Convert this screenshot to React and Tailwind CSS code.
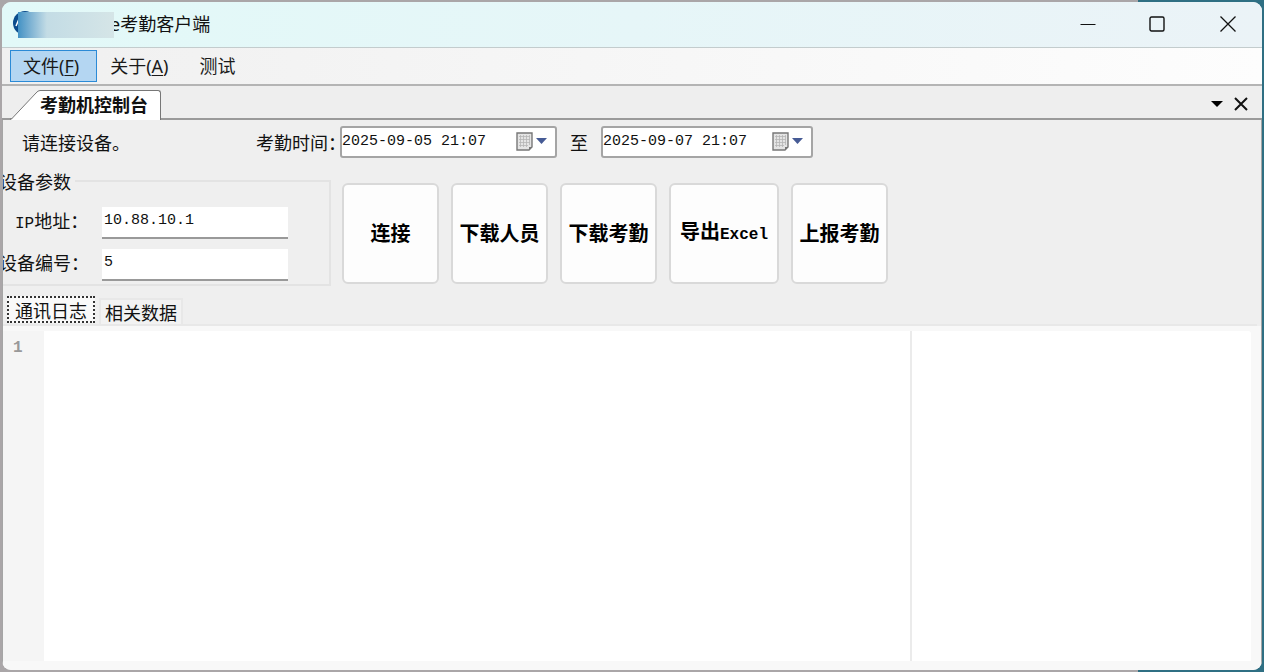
import { useState } from "react";

const menus = [
  { name: "文件", hotkey: "F", active: true },
  { name: "关于", hotkey: "A" },
  { name: "测试" },
];

const actions = [
  { name: "连接", width: "w-[97px]" },
  { name: "下载人员", width: "w-[97px]" },
  { name: "下载考勤", width: "w-[97px]" },
  { name: "导出", latin: "Excel", width: "w-[110px]" },
  { name: "上报考勤", width: "w-[97px]" },
];

function TitleBar() {
  return (
    <header className="flex h-[46px] shrink-0 items-center justify-between border-b border-[#c3cccd] bg-gradient-to-r from-[#e2f9f8] via-[#e6f6f8] to-[#ebf3f7] pb-[2px]">
      <div className="relative flex h-full items-center pl-[108px]">
        <svg className="absolute left-[11px] top-[9px]" width="24" height="24" viewBox="0 0 24 24">
          <circle cx="12" cy="12" r="12" fill="#0b4c8c" />
          <path d="M3 15l3-7 2 7" stroke="#fff" strokeWidth="1.5" fill="none" />
        </svg>
        <h1 className="text-[18px] leading-6 text-[#111]">e考勤客户端</h1>
        <div className="absolute left-4 top-[10px] h-[26px] w-[96px] bg-gradient-to-r from-[#4292c4] via-[#c3dce5] via-30% to-[#d5e5e7]" />
      </div>

      <div className="flex pr-[26px]">
        <button aria-label="最小化" className="flex w-[70px] justify-end">
          <svg width="16" height="16" viewBox="0 0 16 16" stroke="#111" fill="none">
            <path d="M0.5 8.5h15" />
          </svg>
        </button>
        <button aria-label="最大化" className="flex w-[69px] justify-end">
          <svg width="16" height="16" viewBox="0 0 16 16" stroke="#111" strokeWidth="1.4" fill="none">
            <rect x="1" y="1" width="14" height="14" rx="1.5" />
          </svg>
        </button>
        <button aria-label="关闭" className="flex w-[71px] justify-end">
          <svg width="16" height="16" viewBox="0 0 16 16" stroke="#111" strokeWidth="1.3" fill="none">
            <path d="M0.5 0.5l15 15M15.5 0.5l-15 15" />
          </svg>
        </button>
      </div>
    </header>
  );
}

function MenuBar() {
  return (
    <nav className="flex h-[38px] shrink-0 items-center border-b-2 border-[#b4b4b4] bg-gradient-to-r from-[#f0f0f0] to-[#fdfdfd] pl-2">
      {menus.map((menu) => (
        <button
          key={menu.name}
          className={`h-8 border pl-3 pr-[17px] text-[18px] leading-7 text-[#1a1a1a] ${
            menu.active ? "border-[#2b8ad6] bg-[#b4d6f2]" : "border-transparent"
          }`}
        >
          {menu.name}
          {menu.hotkey && (
            <>
              (<span className="underline underline-offset-2">{menu.hotkey}</span>)
            </>
          )}
        </button>
      ))}
    </nav>
  );
}

function DockTabs() {
  return (
    <div className="flex h-[34px] shrink-0 items-end justify-between border-b-2 border-[#9a9a9a] bg-[#eee] pl-2">
      <div className="-mb-[2px] flex">
        <svg width="30" height="30" viewBox="0 0 30 30">
          <path d="M1 29.5L26 3Q28 1 30 1V30H1z" fill="#fff" />
          <path d="M0 29h1.5L26 3Q28 0.5 30 0.5" stroke="#777" fill="none" />
        </svg>
        <h2 className="h-[30px] rounded-tr-[3px] border-r border-t border-[#777] bg-white pr-3 text-[18px] font-bold leading-7 text-[#111]">
          考勤机控制台
        </h2>
      </div>
      <div className="flex h-full items-center gap-2 pr-[13px] pt-1">
        <button aria-label="窗口列表">
          <svg width="14" height="8" viewBox="0 0 14 8">
            <path d="M0 1h12L6 7z" fill="#000" />
          </svg>
        </button>
        <button aria-label="关闭标签">
          <svg width="16" height="14" viewBox="0 0 16 14" stroke="#111" strokeWidth="2" fill="none">
            <path d="M2 1l12 12M14 1L2 13" />
          </svg>
        </button>
      </div>
    </div>
  );
}

function DatePicker({ id, label, defaultValue, width }) {
  return (
    <div className={`flex h-8 items-center rounded-[3px] border-2 border-[#a5a5a5] bg-white pr-1 ${width}`}>
      <input
        id={id}
        aria-label={label}
        defaultValue={defaultValue}
        className="w-full min-w-0 font-['Liberation_Mono','Noto_Sans_CJK_SC',monospace] text-[15px] leading-5 text-[#111] outline-none"
      />
      <button aria-label={`选择${label}`} className="shrink-0">
        <svg width="36" height="22" viewBox="0 0 36 22">
          <path d="M2 2h15v14l-3 3H2z" fill="#e4e4e4" stroke="#777" strokeWidth="1.4" />
          <path d="M4 5.5h11M4 8.5h11M4 11.5h11M4 14.5h9M5.5 4v12M8.5 4v12M11.5 4v12M14.5 4v10" stroke="#b5b5b5" strokeWidth="0.8" />
          <path d="M17 16h-3v3z" fill="#777" />
          <path d="M21 7h11l-5.500 6z" fill="#465b95" />
        </svg>
      </button>
    </div>
  );
}

function DeviceParams() {
  const box =
    "h-8 w-[186px] border-b-2 border-[#999] bg-white px-[2px] pb-1 font-['Liberation_Mono','Noto_Sans_CJK_SC',monospace] text-[15px] leading-5 text-[#111] outline-none";
  const text = "w-[103px] shrink-0 whitespace-nowrap pb-[6px] text-[18px] leading-6";

  return (
    <fieldset className="-ml-1 mt-px h-[115px] w-[332px] shrink-0 border-2 border-l-0 border-[#e3e3e3]">
      <legend className="pr-1 text-[18px] leading-5">设备参数</legend>
      <div className="flex flex-col gap-[10px] pt-4">
        <div className="flex items-center">
          <label htmlFor="ip" className={`${text} pl-4`}>
            <span className="font-['Liberation_Mono',monospace] text-[16px] leading-4">IP</span>地址：
          </label>
          <input id="ip" defaultValue="10.88.10.1" className={box} />
        </div>
        <div className="flex items-center">
          <label htmlFor="device" className={text}>设备编号：</label>
          <input id="device" defaultValue="5" className={box} />
        </div>
      </div>
    </fieldset>
  );
}

function LogPanel() {
  const [tab, setTab] = useState("log");

  return (
    <section className="flex min-h-0 flex-1 flex-col">
      <div className="mr-1 flex items-end gap-1 border-b-2 border-[#e8e8e8] pl-1">
        <button
          onClick={() => setTab("log")}
          className={`mb-px h-[27px] border-2 px-[6px] text-[18px] leading-5 ${
            tab === "log" ? "border-dotted border-[#333] bg-[#f9f9f9]" : "border-transparent"
          }`}
        >
          通讯日志
        </button>
        <button
          onClick={() => setTab("data")}
          className={`h-[26px] border-2 border-b-0 px-1 text-[18px] leading-6 ${
            tab === "data" ? "border-dotted border-[#333] bg-[#f9f9f9]" : "border-[#e8e8e8] bg-[#f2f2f2]"
          }`}
        >
          相关数据
        </button>
      </div>
      <div className="flex flex-1 bg-[#f8f8f8] pb-[9px] pr-[10px] pt-[5px]">
        <div className="w-[41px] shrink-0 bg-[#f5f5f5] pl-[10px] pt-[5px] font-['Liberation_Mono',monospace] text-[16px] font-bold leading-6 text-[#999]">
          1
        </div>
        <textarea
          aria-label="通讯日志"
          className="w-[868px] min-w-0 resize-none border-r-2 border-[#ebebeb] bg-white outline-none"
        />
        <div className="flex-1 rounded-tr-[3px] bg-white" />
      </div>
    </section>
  );
}

export default function App() {
  return (
    <div className="h-screen bg-[linear-gradient(to_right,#aaa6a8_90%,#2f6f83_90%)] p-[2px] font-['Noto_Sans','Noto_Sans_CJK_SC',sans-serif] text-[#111]">
      <div className="flex h-full flex-col overflow-hidden rounded-[9px] bg-[#efefef]">
        <TitleBar />
        <MenuBar />
        <DockTabs />

        <main className="flex min-h-0 flex-1 flex-col overflow-hidden border-l border-r border-[#a5a5a5] font-['Noto_Sans_CJK_SC',sans-serif]">
          <div className="flex h-[50px] shrink-0 items-center pb-[6px] pl-[19px] text-[18px] leading-6">
            <p className="w-[234px] shrink-0">请连接设备。</p>
            <label htmlFor="start" className="w-[84px] shrink-0 whitespace-nowrap">考勤时间：</label>
            <DatePicker id="start" label="开始时间" defaultValue="2025-09-05 21:07" width="w-[217px]" />
            <label htmlFor="end" className="px-[13px]">至</label>
            <DatePicker id="end" label="结束时间" defaultValue="2025-09-07 21:07" width="w-[212px]" />
          </div>

          <div className="flex shrink-0 pb-[10px]">
            <DeviceParams />
            <div className="flex gap-3 pl-[11px] pt-[13px]">
              {actions.map((action) => (
                <button
                  key={action.name}
                  className={`h-[101px] shrink-0 whitespace-nowrap rounded-[6px] border-2 border-[#d9d9d9] bg-[#fdfdfd] pb-[2px] text-[20px] font-bold leading-6 text-black ${action.width}`}
                >
                  {action.name}
                  {action.latin && (
                    <span className="font-['Liberation_Mono',monospace] text-[16px]">{action.latin}</span>
                  )}
                </button>
              ))}
            </div>
          </div>

          <LogPanel />
        </main>
      </div>
    </div>
  );
}
